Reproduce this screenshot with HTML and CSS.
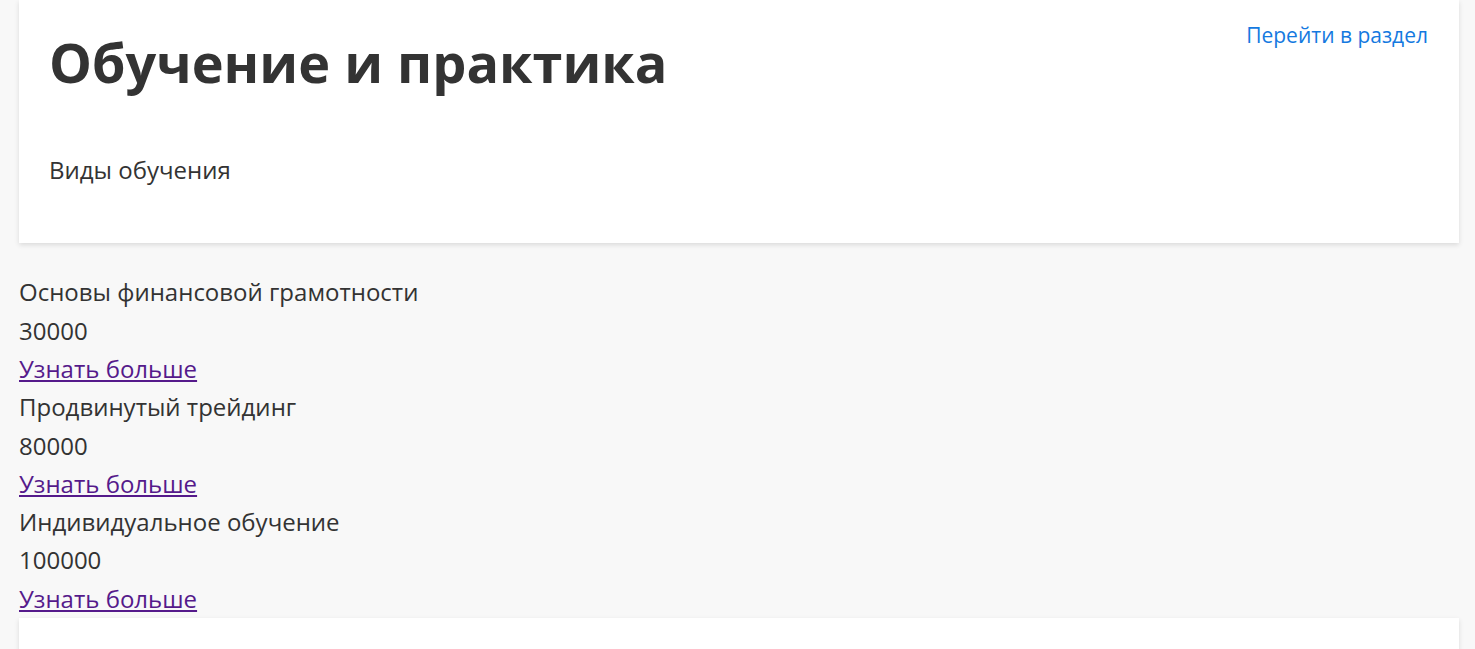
FILE: index.html
```html
<!DOCTYPE html>
<html lang="ru">

<head>
  <meta charset="UTF-8">
  <meta name="viewport" content="width=device-width, initial-scale=1.0">
  <title>Обучение и практика</title>
  <link rel="stylesheet" href="styles.css">
</head>

<body>
  <div class="page">
    <section class="card">
      <div class="card-head">
        <h1>Обучение и практика</h1>
        <a class="section-link" href="#">Перейти в раздел</a>
      </div>
      <p class="card-sub">Виды обучения</p>
    </section>

    <div class="courses">
      <div class="course">
        <div>Основы финансовой грамотности</div>
        <div>30000</div>
        <a href="">Узнать больше</a>
      </div>
      <div class="course">
        <div>Продвинутый трейдинг</div>
        <div>80000</div>
        <a href="">Узнать больше</a>
      </div>
      <div class="course">
        <div>Индивидуальное обучение</div>
        <div>100000</div>
        <a href="">Узнать больше</a>
      </div>
    </div>

    <section class="card card-next"></section>
  </div>
</body>

</html>
```

FILE: styles.css
```css
body {
  background-color: #f8f8f8;
  color: #333;
  font-family: "Open Sans", sans-serif;
  font-size: 24px;
  line-height: 1.6;
  margin: 0;
  padding: 0;
}

.page {
  padding: 0 16px 0 19px;
}

.card {
  background-color: #fff;
  box-shadow: 0 2px 5px rgba(0, 0, 0, 0.12);
  padding: 20px 30px 54px 30px;
}

.card-head {
  display: flex;
  justify-content: space-between;
  align-items: flex-start;
}

h1 {
  font-size: 54px;
  font-weight: bold;
  line-height: normal;
  margin: 5px 0 0 0;
}

.section-link {
  color: #1479e0;
  font-size: 21px;
  line-height: normal;
  text-decoration: none;
  margin-top: 1px;
  margin-right: 1px;
}

.card-sub {
  margin: 52px 0 0 0;
}

.courses {
  padding-top: 30px;
  line-height: 38.3px;
}

.course a {
  color: #551a8b;
}

.card-next {
  height: 80px;
  padding: 0;
}
```
